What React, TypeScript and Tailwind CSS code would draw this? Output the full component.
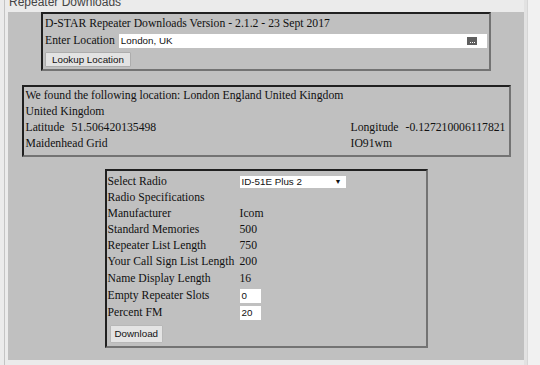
import React from 'react';

const serif = "font-['Liberation_Serif','Times_New_Roman',serif]";
const sans = "font-['Liberation_Sans',Arial,sans-serif]";
const box = 'border-2 border-t-[#202020] border-l-[#202020] border-r-[#737373] border-b-[#737373]';

const specs: [string, string][] = [
  ['Manufacturer', 'Icom'],
  ['Standard Memories', '500'],
  ['Repeater List Length', '750'],
  ['Your Call Sign List Length', '200'],
];

export default function App() {
  return (
    <div className={`flex h-[365px] w-[540px] overflow-hidden bg-[#ebebeb] text-[#111] ${serif}`}>
      <div className="w-[4px]" />
      <div className="w-px bg-[#c4c4c4]" />
      <div className="flex w-[519px] flex-col pl-[3px]">
        {/* page title, cut off at the top */}
        <div className={`-mt-[8px] h-[20px] pl-[1px] text-[12px] leading-[20px] text-[#444] ${sans}`}>Repeater Downloads</div>

        <div className="flex h-[348px] w-[516px] flex-col items-center bg-[#c0c0c0] text-[11.7px] leading-[16px]">
          {/* location lookup */}
          <div className={`${box} flex w-[450px] flex-col px-[2px] pt-[2px] pb-[2px]`}>
            <div className="h-[16px]">D-STAR Repeater Downloads Version - 2.1.2 - 23 Sept 2017</div>
            <div className="flex h-[18px] items-center gap-[4px]">
              <span>Enter Location</span>
              <div className={`relative flex h-[14px] flex-1 items-center bg-white pl-[2px] text-[9.8px] ${sans}`}>
                London, UK
                <div className="absolute right-[10px] top-[3px] flex h-[8px] w-[10px] items-end justify-center gap-[1px] bg-[#5f5f5f] pb-[2px]">
                  <span className="h-px w-px bg-white" />
                  <span className="h-px w-px bg-white" />
                  <span className="h-px w-px bg-white" />
                </div>
              </div>
            </div>
            <div className="mt-[2px] flex h-[15px]">
              <button className={`h-[15px] rounded-[1px] border border-[#adadad] bg-[#e3e3e3] px-[6px] text-[9.8px] leading-[13px] ${sans}`}>Lookup Location</button>
            </div>
          </div>

          {/* found location */}
          <div className={`${box} mt-[14px] flex w-[489px] flex-col px-[2px] pt-px pb-[3px]`}>
            <div className="h-[16px]">We found the following location: London England United Kingdom</div>
            <div className="h-[16px]">United Kingdom</div>
            <div className="grid h-[16px] grid-cols-[325px_1fr]">
              <div className="flex gap-[7px]"><span>Latitude</span><span>51.506420135498</span></div>
              <div className="flex gap-[7px]"><span>Longitude</span><span>-0.127210006117821</span></div>
            </div>
            <div className="grid h-[16px] grid-cols-[325px_1fr]">
              <span>Maidenhead Grid</span>
              <span>IO91wm</span>
            </div>
          </div>

          {/* radio specs */}
          <div className={`${box} mt-[12px] flex w-[323px] flex-col px-px pt-[2px] pb-[3px]`}>
            <div className="grid h-[17px] grid-cols-[132px_1fr] items-center">
              <span>Select Radio</span>
              <div className={`flex h-[12px] w-[106px] items-center justify-between bg-white pl-[2px] pr-[4px] text-[9.8px] ${sans}`}>
                <span>ID-51E Plus 2</span>
                <span className="text-[7px]">▼</span>
              </div>
            </div>
            <div className="h-[16px]">Radio Specifications</div>
            {specs.map(([k, v]) => (
              <div key={k} className="grid h-[16px] grid-cols-[132px_1fr]">
                <span className="whitespace-nowrap">{k}</span>
                <span>{v}</span>
              </div>
            ))}
            <div className="grid h-[17px] grid-cols-[132px_1fr] items-center">
              <span>Name Display Length</span>
              <span>16</span>
            </div>
            <div className="grid h-[17px] grid-cols-[132px_1fr] items-center">
              <span>Empty Repeater Slots</span>
              <div className={`h-[14px] w-[21px] bg-white pl-[2px] text-[9.8px] leading-[14px] ${sans}`}>0</div>
            </div>
            <div className="grid h-[17px] grid-cols-[132px_1fr] items-center">
              <span>Percent FM</span>
              <div className={`h-[14px] w-[21px] bg-white pl-[2px] text-[9.8px] leading-[14px] ${sans}`}>20</div>
            </div>
            <div className="mt-[4px] flex h-[18px] pl-[2px]">
              <button className={`h-[18px] rounded-[1px] border border-[#b8b8b8] bg-[#e4e4e4] px-[4px] text-[9.8px] ${sans}`}>Download</button>
            </div>
          </div>
        </div>
      </div>
      <div className="w-[3px] bg-[#e2e2e2]" />
      <div className="w-px bg-[#d6d6d6]" />
      <div className="flex-1 bg-[#f1f1f1]" />
    </div>
  );
}
